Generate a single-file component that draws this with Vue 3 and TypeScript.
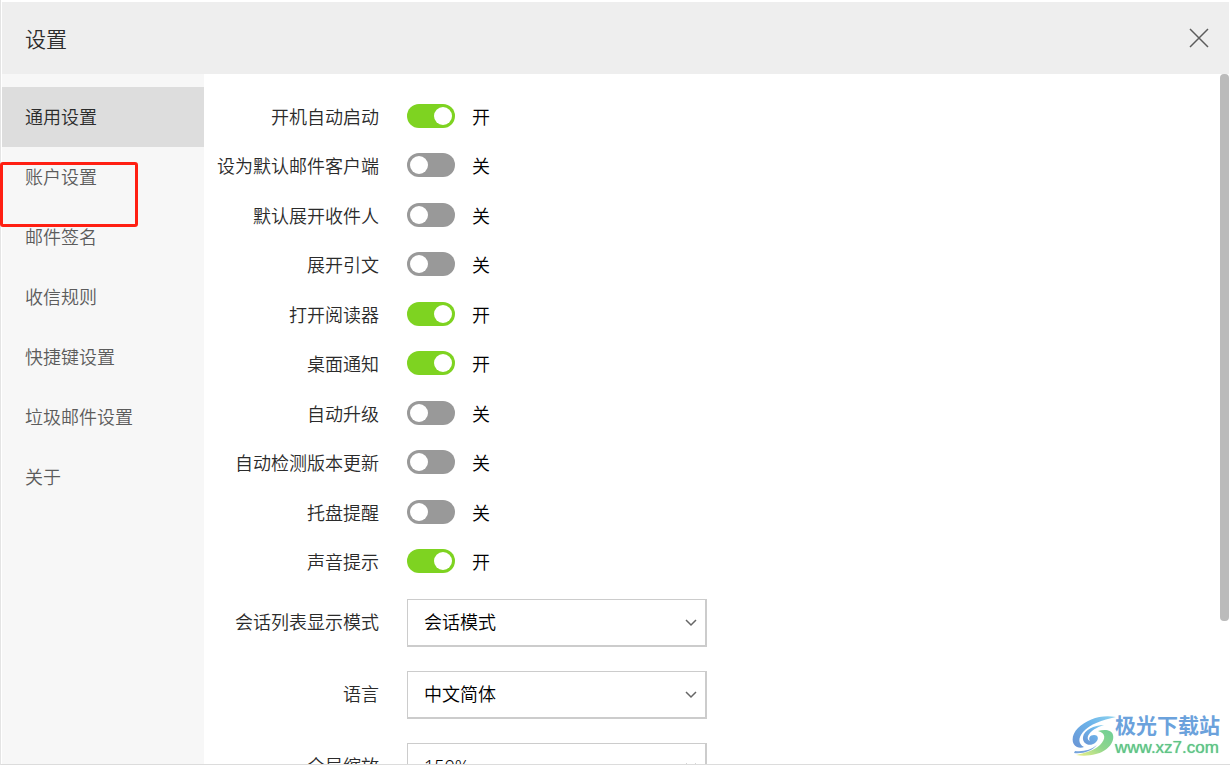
<script setup lang="ts">
import { ref } from 'vue'

interface Toggle { id: string; label: string; on: boolean }
interface Choice { id: string; label: string; value: string; options: string[] }

const sections = ['通用设置', '账户设置', '邮件签名', '收信规则', '快捷键设置', '垃圾邮件设置', '关于']
const active = ref('通用设置')

const toggles = ref<Toggle[]>([
  { id: 'autostart', label: '开机自动启动', on: true },
  { id: 'default-client', label: '设为默认邮件客户端', on: false },
  { id: 'expand-recipients', label: '默认展开收件人', on: false },
  { id: 'expand-quote', label: '展开引文', on: false },
  { id: 'open-reader', label: '打开阅读器', on: true },
  { id: 'desktop-notify', label: '桌面通知', on: true },
  { id: 'auto-upgrade', label: '自动升级', on: false },
  { id: 'check-version', label: '自动检测版本更新', on: false },
  { id: 'tray-remind', label: '托盘提醒', on: false },
  { id: 'sound', label: '声音提示', on: true },
])

const choices = ref<Choice[]>([
  { id: 'list-mode', label: '会话列表显示模式', value: '会话模式', options: ['会话模式'] },
  { id: 'language', label: '语言', value: '中文简体', options: ['中文简体'] },
  { id: 'zoom', label: '全局缩放', value: '150%', options: ['150%'] },
])
</script>

<template>
  <div class="window">
    <header class="titlebar">
      <h1>设置</h1>
      <button class="close" type="button" aria-label="关闭">
        <svg width="20" height="20" viewBox="0 0 20 20"><path d="M1 1 19 19M19 1 1 19" fill="none" stroke="#5c5c5c" stroke-width="1.5" /></svg>
      </button>
    </header>
    <div class="body">
      <nav class="sidebar">
        <button
          v-for="s in sections"
          :key="s"
          type="button"
          class="nav-item"
          :class="{ active: s === active }"
          @click="active = s"
        >{{ s }}</button>
      </nav>
      <main class="content">
        <div class="toggles">
          <div v-for="t in toggles" :key="t.id" class="row">
            <label :for="t.id">{{ t.label }}</label>
            <input :id="t.id" v-model="t.on" class="switch" type="checkbox" role="switch" />
            <span class="state">{{ t.on ? '开' : '关' }}</span>
          </div>
        </div>
        <div class="choices">
          <div v-for="c in choices" :key="c.id" class="row choice">
            <label :for="c.id">{{ c.label }}</label>
            <div class="select-wrap">
              <select :id="c.id" v-model="c.value">
                <option v-for="o in c.options" :key="o">{{ o }}</option>
              </select>
              <svg class="chevron" width="12" height="8" viewBox="0 0 12 8"><path d="M1 1 6 6 11 1" fill="none" stroke="#666" stroke-width="1.5" /></svg>
            </div>
          </div>
        </div>
      </main>
      <div class="scroll-thumb"></div>
    </div>
    <div class="highlight"></div>
    <div class="watermark">
      <svg width="44" height="42" viewBox="0 0 44 42">
        <defs>
          <linearGradient id="wm-blue" x1="0" y1="1" x2="1" y2="0">
            <stop offset="0" stop-color="#6a94d4" /><stop offset=".6" stop-color="#6cb4ea" /><stop offset="1" stop-color="#8fd3ee" />
          </linearGradient>
          <linearGradient id="wm-green" x1="0" y1="1" x2="1" y2="0">
            <stop offset="0" stop-color="#eef08a" /><stop offset=".5" stop-color="#8fd68c" /><stop offset="1" stop-color="#6fcf97" />
          </linearGradient>
        </defs>
        <path d="M44 2C30-1 15 4 6 13C-1 20-1 29 5 32C7 33 10 33 12 32C6 29 6 23 11 17C18 9 30 5 44 2Z" fill="url(#wm-blue)" />
        <path d="M32 10C22 10 12 15 11 22C10 29 18 32 23 28C27 25 27 20 22 20C18 20 16 23 18 26C13 24 16 15 32 10Z" fill="url(#wm-blue)" />
        <path d="M26 16C33 14 40 15 41 20C43 28 34 37 24 39C17 41 10 41 4 40C12 38 22 36 28 30C34 24 34 18 26 16Z" fill="url(#wm-green)" />
        <path d="M3 36C11 37 19 35 25 30C20 36 11 39 2 38Z" fill="#74a3dc" />
      </svg>
      <div class="wm-text">
        <span class="wm-name">极光下载站</span>
        <span class="wm-url">www.xz7.com</span>
      </div>
    </div>
  </div>
</template>

<style>
body {
  margin: 0;
  background: #fff;
}
</style>

<style scoped>
.window {
  position: relative;
  box-sizing: border-box;
  display: flex;
  flex-direction: column;
  height: 100vh;
  padding: 2px 1px 0 1px;
  border-left: 1px solid #e4e4e4;
  border-bottom: 1px solid #dcdcdc;
  font-family: "Noto Sans", "Noto Sans CJK SC", sans-serif;
  font-size: 18px;
  font-weight: 350;
  color: #2b2b2b;
}
.titlebar {
  display: flex;
  align-items: center;
  justify-content: space-between;
  flex: none;
  box-sizing: border-box;
  height: 72px;
  padding: 0 20px 0 23px;
  background: #eee;
}
h1 {
  margin: 0;
  padding-top: 2px;
  font-size: 21px;
  font-weight: 350;
  line-height: 30px;
}
.close {
  display: flex;
  padding: 0;
  border: 0;
  background: none;
}
.body {
  position: relative;
  display: flex;
  flex: 1;
  min-height: 0;
}
.sidebar {
  flex: none;
  display: flex;
  flex-direction: column;
  width: 202px;
  padding-top: 13px;
  background: #f7f7f7;
}
.nav-item {
  height: 60px;
  padding: 0 23px 2px;
  border: 0;
  background: none;
  font: inherit;
  color: #5c5c5c;
  text-align: left;
}
.nav-item.active {
  background: #ddd;
  color: #2b2b2b;
}
.content {
  flex: 1;
  min-width: 0;
  padding-top: 17px;
  overflow: hidden;
}
.toggles {
  display: grid;
  grid-template-rows: repeat(10, 1fr);
  height: 495px;
}
.row {
  display: grid;
  grid-template-columns: 175px auto 1fr;
  align-items: center;
}
.row label {
  text-align: right;
  white-space: nowrap;
}
.switch {
  appearance: none;
  display: flex;
  align-items: center;
  box-sizing: border-box;
  width: 48px;
  height: 24px;
  margin: 0 17px 0 28px;
  padding: 0 3px;
  border-radius: 12px;
  background: #999;
}
.switch::before {
  content: "";
  width: 18px;
  height: 18px;
  border-radius: 50%;
  background: #fff;
}
.switch:checked {
  justify-content: flex-end;
  background: #7ed321;
}
.state {
  color: #000;
}
.choices {
  display: flex;
  flex-direction: column;
  gap: 24px;
  padding-top: 13px;
}
.choice {
  grid-template-columns: 175px 300px;
  column-gap: 28px;
}
.choice label {
  padding-bottom: 4px;
}
.select-wrap {
  position: relative;
}
select {
  appearance: none;
  display: block;
  box-sizing: border-box;
  width: 100%;
  height: 48px;
  padding: 0 40px 2px 16px;
  border: solid #ccc;
  border-width: 1px 2px 2px 1px;
  border-radius: 0;
  background: #fff;
  font: inherit;
  color: #000;
}
.chevron {
  position: absolute;
  top: 20px;
  right: 10px;
  pointer-events: none;
}
.scroll-thumb {
  position: absolute;
  top: 0;
  right: 0;
  width: 9px;
  height: 547px;
  border-radius: 4px;
  background: #bbb;
}
.highlight {
  position: absolute;
  top: 162px;
  left: -1px;
  box-sizing: border-box;
  width: 138px;
  height: 65px;
  border: 3px solid #ff1f12;
  border-radius: 3px;
}
.watermark {
  position: absolute;
  right: 10px;
  bottom: 6px;
  display: flex;
  align-items: center;
}
.wm-text {
  display: flex;
  flex-direction: column;
  margin-left: -1px;
  white-space: nowrap;
}
.wm-name {
  font-family: "Liberation Sans", "Noto Sans CJK SC", sans-serif;
  font-size: 21px;
  font-weight: 700;
  line-height: 24px;
  color: #6ba2dc;
}
.wm-url {
  font-family: "Liberation Sans", sans-serif;
  font-size: 17px;
  font-weight: 400;
  line-height: 20px;
  color: #5fc486;
  text-shadow: 0 0 1px #6fcb92;
}
</style>
